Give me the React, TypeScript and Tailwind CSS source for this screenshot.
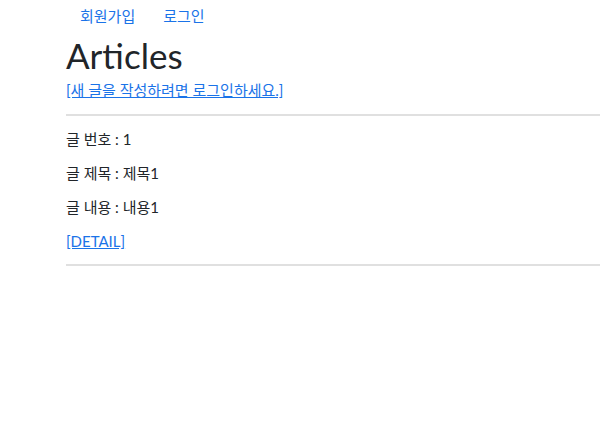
// Articles list page (logged-out view)

const font = { fontFamily: '"Lato", "Noto Sans CJK KR", sans-serif' };

const articles = [{ id: 1, title: '제목1', content: '내용1' }];

export default function App() {
  return (
    <div className="min-h-[441px] bg-white pl-[66px] text-[15px] text-[#212529]" style={font}>
      <nav className="flex h-[32px] items-center">
        <a href="#" className="px-[14px] text-[#1a73e8]">회원가입</a>
        <a href="#" className="px-[14px] text-[#1a73e8]">로그인</a>
      </nav>
      <h1 className="text-[35px] leading-[46px] font-normal">Articles</h1>
      <a href="#" className="block leading-[24px] text-[#1a73e8] underline">
        [새 글을 작성하려면 로그인하세요.]
      </a>
      <hr className="mt-[12px] border-t-2 border-[#e0e0e0]" />
      {articles.map(a => (
        <div key={a.id} className="pt-[6px]">
          <p className="leading-[34px]">글 번호 : {a.id}</p>
          <p className="leading-[34px]">글 제목 : {a.title}</p>
          <p className="leading-[34px]">글 내용 : {a.content}</p>
          <a href="#" className="block leading-[34px] text-[#1a73e8] underline">[DETAIL]</a>
          <hr className="mt-[6px] border-t-2 border-[#e0e0e0]" />
        </div>
      ))}
    </div>
  );
}
